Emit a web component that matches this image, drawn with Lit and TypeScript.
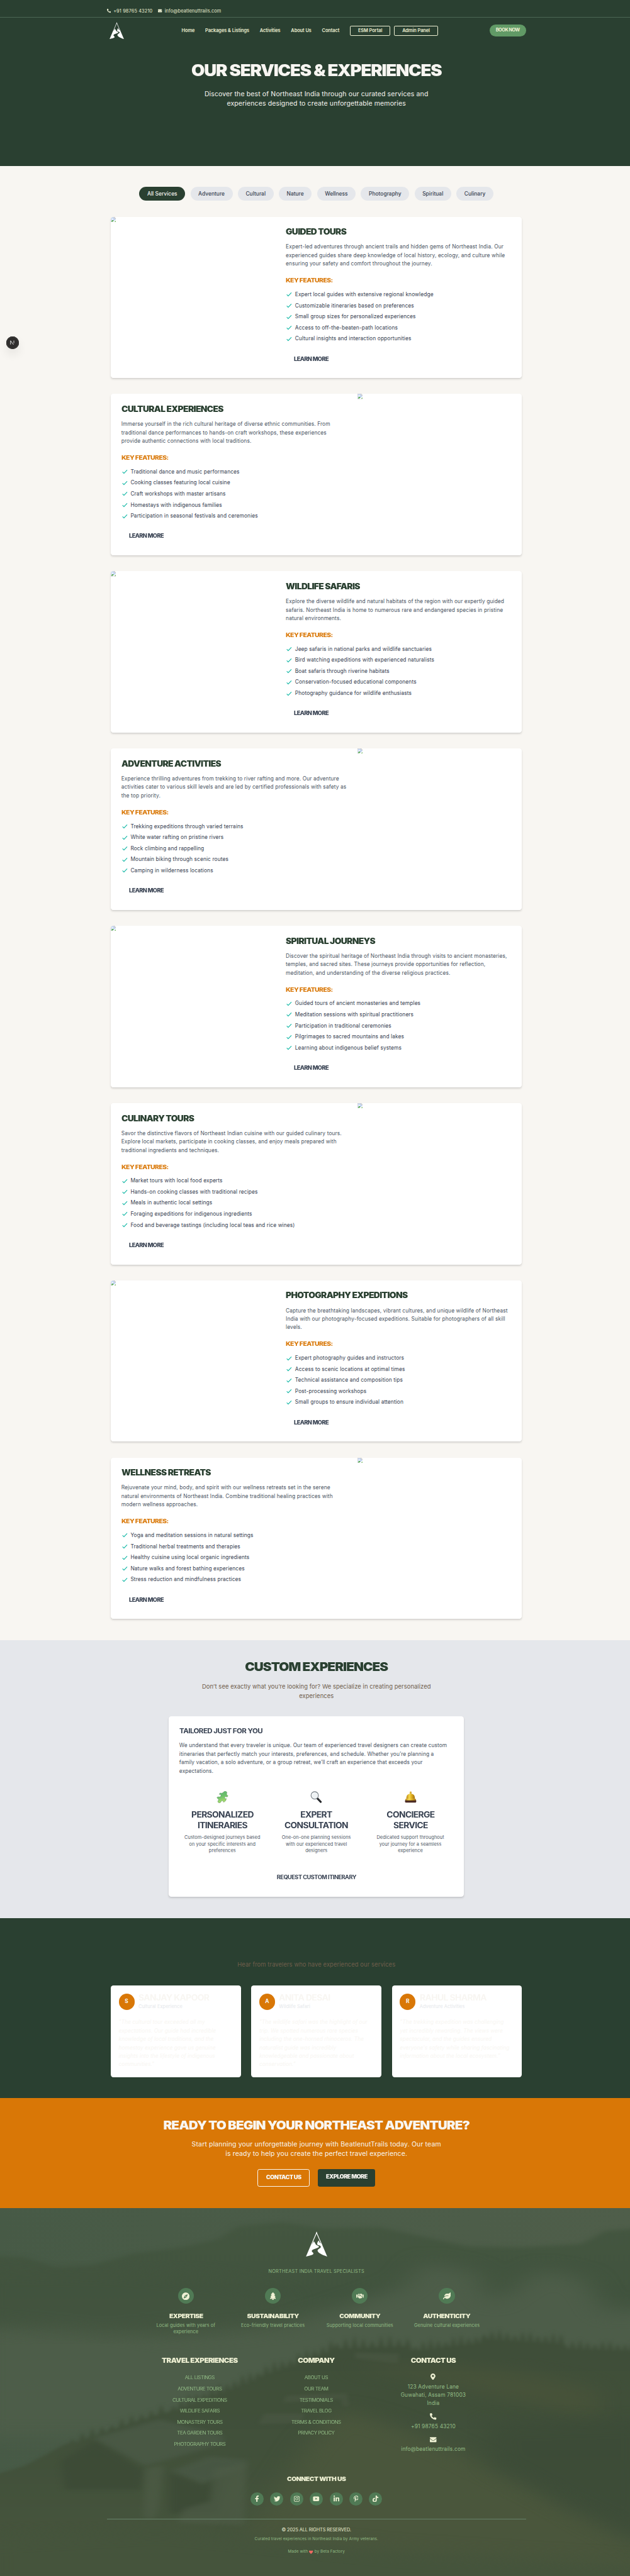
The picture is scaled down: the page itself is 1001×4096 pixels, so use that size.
import { LitElement, html, css } from "lit";
import { classMap } from "lit/directives/class-map.js";

type Service = { title: string; copy: string[]; features: string[] };

const SERVICES: Service[] = [
  {
    title: "GUIDED TOURS",
    copy: [
      "Expert-led adventures through ancient trails and hidden gems of Northeast India. Our",
      "experienced guides share deep knowledge of local history, ecology, and culture while",
      "ensuring your safety and comfort throughout the journey.",
    ],
    features: [
      "Expert local guides with extensive regional knowledge",
      "Customizable itineraries based on preferences",
      "Small group sizes for personalized experiences",
      "Access to off-the-beaten-path locations",
      "Cultural insights and interaction opportunities",
    ],
  },
  {
    title: "CULTURAL EXPERIENCES",
    copy: [
      "Immerse yourself in the rich cultural heritage of diverse ethnic communities. From",
      "traditional dance performances to hands-on craft workshops, these experiences",
      "provide authentic connections with local traditions.",
    ],
    features: [
      "Traditional dance and music performances",
      "Cooking classes featuring local cuisine",
      "Craft workshops with master artisans",
      "Homestays with indigenous families",
      "Participation in seasonal festivals and ceremonies",
    ],
  },
  {
    title: "WILDLIFE SAFARIS",
    copy: [
      "Explore the diverse wildlife and natural habitats of the region with our expertly guided",
      "safaris. Northeast India is home to numerous rare and endangered species in pristine",
      "natural environments.",
    ],
    features: [
      "Jeep safaris in national parks and wildlife sanctuaries",
      "Bird watching expeditions with experienced naturalists",
      "Boat safaris through riverine habitats",
      "Conservation-focused educational components",
      "Photography guidance for wildlife enthusiasts",
    ],
  },
  {
    title: "ADVENTURE ACTIVITIES",
    copy: [
      "Experience thrilling adventures from trekking to river rafting and more. Our adventure",
      "activities cater to various skill levels and are led by certified professionals with safety as",
      "the top priority.",
    ],
    features: [
      "Trekking expeditions through varied terrains",
      "White water rafting on pristine rivers",
      "Rock climbing and rappelling",
      "Mountain biking through scenic routes",
      "Camping in wilderness locations",
    ],
  },
  {
    title: "SPIRITUAL JOURNEYS",
    copy: [
      "Discover the spiritual heritage of Northeast India through visits to ancient monasteries,",
      "temples, and sacred sites. These journeys provide opportunities for reflection,",
      "meditation, and understanding of the diverse religious practices.",
    ],
    features: [
      "Guided tours of ancient monasteries and temples",
      "Meditation sessions with spiritual practitioners",
      "Participation in traditional ceremonies",
      "Pilgrimages to sacred mountains and lakes",
      "Learning about indigenous belief systems",
    ],
  },
  {
    title: "CULINARY TOURS",
    copy: [
      "Savor the distinctive flavors of Northeast Indian cuisine with our guided culinary tours.",
      "Explore local markets, participate in cooking classes, and enjoy meals prepared with",
      "traditional ingredients and techniques.",
    ],
    features: [
      "Market tours with local food experts",
      "Hands-on cooking classes with traditional recipes",
      "Meals in authentic local settings",
      "Foraging expeditions for indigenous ingredients",
      "Food and beverage tastings (including local teas and rice wines)",
    ],
  },
  {
    title: "PHOTOGRAPHY EXPEDITIONS",
    copy: [
      "Capture the breathtaking landscapes, vibrant cultures, and unique wildlife of Northeast",
      "India with our photography-focused expeditions. Suitable for photographers of all skill",
      "levels.",
    ],
    features: [
      "Expert photography guides and instructors",
      "Access to scenic locations at optimal times",
      "Technical assistance and composition tips",
      "Post-processing workshops",
      "Small groups to ensure individual attention",
    ],
  },
  {
    title: "WELLNESS RETREATS",
    copy: [
      "Rejuvenate your mind, body, and spirit with our wellness retreats set in the serene",
      "natural environments of Northeast India. Combine traditional healing practices with",
      "modern wellness approaches.",
    ],
    features: [
      "Yoga and meditation sessions in natural settings",
      "Traditional herbal treatments and therapies",
      "Healthy cuisine using local organic ingredients",
      "Nature walks and forest bathing experiences",
      "Stress reduction and mindfulness practices",
    ],
  },
];

const FILTERS = ["All Services", "Adventure", "Cultural", "Nature", "Wellness", "Photography", "Spiritual", "Culinary"];

const REVIEWS = [
  {
    name: "SANJAY KAPOOR",
    kind: "Cultural Experience",
    lines: [
      '"The cultural tour exceeded all my',
      "expectations. Our guide had incredible",
      "knowledge of local traditions, and the",
      "homestay experience gave us genuine",
      "insights into the lifestyle of indigenous",
      'communities."',
    ],
  },
  {
    name: "ANITA DESAI",
    kind: "Wildlife Safari",
    lines: [
      '"The wildlife safari was the highlight of our',
      "trip. We spotted numerous rare species",
      "including the one-horned rhinoceros. The",
      "naturalist guide was incredibly",
      "knowledgeable and passionate about",
      'conservation."',
    ],
  },
  {
    name: "RAHUL SHARMA",
    kind: "Adventure Activities",
    lines: [
      '"The trekking expedition was challenging',
      "yet incredibly rewarding. The views were",
      "spectacular, and the guides ensured",
      "everyone's safety while sharing fascinating",
      'information about the local ecosystem."',
    ],
  },
];

/* Solid glyphs: [viewBox width, viewBox height, path] */
const GLYPHS: Record<string, [number, number, string]> = {
  phone: [512, 512, "M497.39 361.8l-112-48a24 24 0 0 0-28 6.9l-49.6 60.6A370.66 370.66 0 0 1 130.6 204.11l60.6-49.6a23.94 23.94 0 0 0 6.9-28l-48-112A24.16 24.16 0 0 0 122.6.61l-104 24A24 24 0 0 0 0 48c0 256.5 207.9 464 464 464a24 24 0 0 0 23.4-18.6l24-104a24.29 24.29 0 0 0-14.01-27.6z"],
  mail: [512, 512, "M502.3 190.8c3.9-3.1 9.7-.2 9.7 4.7V400c0 26.5-21.5 48-48 48H48c-26.5 0-48-21.5-48-48V195.6c0-5 5.7-7.8 9.7-4.7 22.4 17.4 52.1 39.5 154.1 113.6 21.1 15.4 56.7 47.8 92.2 47.6 35.7.3 72-32.8 92.3-47.6 102-74.1 131.6-96.3 154-113.7zM256 320c23.2.4 56.6-29.2 73.4-41.4 132.7-96.3 142.8-104.7 173.4-128.7 5.8-4.5 9.2-11.5 9.2-18.9v-19c0-26.5-21.5-48-48-48H48c-26.5 0-48 21.5-48 48v19c0 7.4 3.4 14.3 9.2 18.9 30.6 23.9 40.7 32.4 173.4 128.7 16.8 12.2 50.2 41.8 73.4 41.4z"],
  pin: [384, 512, "M172.268 501.67C26.97 291.031 0 269.413 0 192 0 85.961 85.961 0 192 0s192 85.961 192 192c0 77.413-26.97 99.031-172.268 309.67-9.535 13.774-29.93 13.773-39.464 0zM192 272c44.183 0 80-35.817 80-80s-35.817-80-80-80-80 35.817-80 80 35.817 80 80 80z"],
  compass: [496, 512, "M225.38 233.37c-12.5 12.5-12.5 32.76 0 45.25 12.49 12.5 32.76 12.5 45.25 0 12.5-12.5 12.5-32.76 0-45.25-12.5-12.49-32.76-12.49-45.25 0zM248 8C111.03 8 0 119.03 0 256s111.03 248 248 248 248-111.03 248-248S384.97 8 248 8zm126.14 148.05L308.17 300.4a31.938 31.938 0 0 1-15.77 15.77l-144.34 65.97c-16.65 7.61-33.81-9.55-26.2-26.2l65.98-144.35a31.938 31.938 0 0 1 15.77-15.77l144.34-65.97c16.65-7.6 33.8 9.55 26.19 26.2z"],
  tree: [384, 512, "M378.31 378.49L298.42 288h30.63c9.01 0 16.98-5 20.78-13.06 3.8-8.04 2.55-17.26-3.28-24.05L268.42 160h28.89c9.1 0 17.3-5.35 20.86-13.61 3.52-8.13 1.86-17.59-4.24-24.08L203.66 4.83c-6.03-6.45-17.28-6.45-23.32 0L70.06 122.31c-6.1 6.49-7.75 15.95-4.24 24.08C69.38 154.65 77.59 160 86.69 160h28.89l-78.14 90.91c-5.81 6.78-7.06 15.99-3.27 24.04C37.97 283 45.93 288 54.95 288h30.63L5.69 378.49c-6 6.79-7.36 16.09-3.56 24.26 3.75 8.05 12 13.25 21.01 13.25H160v24.45l-30.29 48.4c-5.32 10.64 2.42 23.16 14.31 23.16h95.96c11.89 0 19.63-12.52 14.31-23.16L224 440.45V416h136.86c9.01 0 17.26-5.2 21.01-13.25 3.8-8.17 2.44-17.47-3.56-24.26z"],
  handshake: [640, 512, "M434.7 64h-85.9c-8 0-15.7 3-21.6 8.4l-98.3 90c-.1.1-.2.3-.3.4-16.6 15.6-16.3 40.5-2.1 56 12.7 13.9 39.4 17.6 56.1 2.7.1-.1.3-.1.4-.2l79.9-73.2c6.5-5.9 16.7-5.5 22.6 1 6 6.5 5.5 16.6-1 22.6l-26.1 23.9L504 313.8c2.9 2.4 5.5 5 7.9 7.7V128l-54.6-54.6c-5.9-6-14.1-9.4-22.6-9.4zM544 128.2v223.9c0 17.7 14.3 32 32 32h64V128.2h-96zm48 223.9c-8.8 0-16-7.2-16-16s7.2-16 16-16 16 7.2 16 16-7.2 16-16 16zM0 384h64c17.7 0 32-14.3 32-32V128.2H0V384zm48-63.9c8.8 0 16 7.2 16 16s-7.2 16-16 16-16-7.2-16-16c0-8.9 7.2-16 16-16zm435.9 18.6L334.6 217.5l-30 27.5c-29.7 27.1-75.2 24.5-101.7-4.4-26.9-29.4-24.8-74.9 4.4-101.7L289.1 64h-83.8c-8.5 0-16.6 3.4-22.6 9.4L128 128v223.9h18.3l90.5 81.9c27.4 22.3 67.7 18.1 90-9.3l.2-.2 17.9 15.5c15.9 13 39.4 10.5 52.3-5.4l31.4-38.6 5.4 4.4c13.7 11.1 33.9 9.1 45-4.7l9.5-11.7c11.2-13.8 9.1-33.9-4.6-45.1z"],
  leaf: [576, 512, "M546.2 9.7c-5.6-12.5-21.6-13-28.3-1.2C486.9 62.4 431.4 96 368 96h-80C182 96 96 182 96 288c0 7 .8 13.7 1.5 20.5C161.3 262.8 253.4 224 384 224c8.8 0 16 7.2 16 16s-7.2 16-16 16C132.6 256 26 410.1 2.4 468c-6.6 16.3 1.2 34.9 17.5 41.6 16.4 6.8 35-1.1 41.8-17.3 1.5-3.6 20.9-47.9 71.9-90.6 32.4 43.9 94 85.8 174.9 77.2C465.5 467.5 576 326.7 576 154.3c0-50.2-10.8-102.2-29.8-144.6z"],
  facebook: [320, 512, "M279.14 288l14.22-92.66h-88.91v-60.13c0-25.35 12.42-50.06 52.24-50.06h40.42V6.26S260.43 0 225.36 0c-73.22 0-121.08 44.38-121.08 124.72v70.62H22.89V288h81.39v224h100.17V288z"],
  twitter: [512, 512, "M459.37 151.716c.325 4.548.325 9.097.325 13.645 0 138.72-105.583 298.558-298.558 298.558-59.452 0-114.68-17.219-161.137-47.106 8.447.974 16.568 1.299 25.34 1.299 49.055 0 94.213-16.568 130.274-44.832-46.132-.975-84.792-31.188-98.112-72.772 6.498.974 12.995 1.624 19.818 1.624 9.421 0 18.843-1.3 27.614-3.573-48.081-9.747-84.143-51.98-84.143-102.985v-1.299c13.969 7.797 30.214 12.67 47.431 13.319-28.264-18.843-46.781-51.005-46.781-87.391 0-19.492 5.197-37.36 14.294-52.954 51.655 63.675 129.3 105.258 216.365 109.807-1.624-7.797-2.599-15.918-2.599-24.04 0-57.828 46.782-104.934 104.934-104.934 30.213 0 57.502 12.67 76.67 33.137 23.715-4.548 46.456-13.32 66.599-25.34-7.798 24.366-24.366 44.833-46.132 57.827 21.117-2.273 41.584-8.122 60.426-16.243-14.292 20.791-32.161 39.308-52.628 54.253z"],
  instagram: [448, 512, "M130 32h188a130 130 0 0 1 130 130v188a130 130 0 0 1-130 130H130A130 130 0 0 1 0 350V162A130 130 0 0 1 130 32zm0 40a90 90 0 0 0-90 90v188a90 90 0 0 0 90 90h188a90 90 0 0 0 90-90V162a90 90 0 0 0-90-90zm94 69a115 115 0 1 1 0 230 115 115 0 0 1 0-230zm0 40a75 75 0 1 0 0 150 75 75 0 0 0 0-150zm120-72a27 27 0 1 1 0 54 27 27 0 0 1 0-54z"],
  youtube: [512, 512, "M96 72h320a80 80 0 0 1 80 80v208a80 80 0 0 1-80 80H96a80 80 0 0 1-80-80V152a80 80 0 0 1 80-80zm112 104v160l138-80z"],
  linkedin: [448, 512, "M100.28 448H7.4V148.9h92.88zM53.79 108.1C24.09 108.1 0 83.5 0 53.8a53.79 53.79 0 0 1 107.58 0c0 29.7-24.1 54.3-53.79 54.3zM447.9 448h-92.68V302.4c0-34.7-.7-79.2-48.29-79.2-48.29 0-55.69 37.7-55.69 76.7V448h-92.78V148.9h89.08v40.8h1.3c12.4-23.5 42.69-48.3 87.88-48.3 94 0 111.28 61.9 111.28 142.3V448z"],
  pinterest: [384, 512, "M204 6.5C101.4 6.5 0 74.9 0 185.6 0 256 39.6 296 63.6 296c9.9 0 15.6-27.6 15.6-35.4 0-9.3-23.7-29.1-23.7-67.8 0-80.4 61.2-137.4 140.4-137.4 68.1 0 118.5 38.7 118.5 109.8 0 53.1-21.3 152.7-90.3 152.7-24.9 0-46.2-18-46.2-43.8 0-37.8 26.4-74.4 26.4-113.4 0-66.2-93.9-54.2-93.9 25.8 0 16.8 2.1 35.4 9.6 50.7-13.8 59.4-42 147.9-42 209.1 0 18.9 2.7 37.5 4.5 56.4 3.4 3.8 1.7 3.4 6.9 1.5 50.4-69 48.6-82.5 71.4-172.8 12.3 23.4 44.1 36 69.3 36 106.2 0 153.9-103.5 153.9-196.8C384 71.3 298.2 6.5 204 6.5z"],
  tiktok: [448, 512, "M448,209.91a210.06,210.06,0,0,1-122.77-39.25V349.38A162.55,162.55,0,1,1,185,188.31V278.2a74.62,74.62,0,1,0,52.23,71.18V0l88,0a121.18,121.18,0,0,0,1.86,22.17h0A122.18,122.18,0,0,0,381,102.39a121.43,121.43,0,0,0,67,20.14Z"],
  heart: [512, 512, "M462.3 62.6C407.5 15.9 326 24.3 275.7 76.2L256 96.5l-19.7-20.3C186.100 24.300 104.500 15.900 49.700 62.600c-62.800 53.600-66.100 149.800-9.900 207.900l193.500 199.800c12.500 12.900 32.800 12.900 45.300 0l193.500-199.800c56.300-58.100 53-154.300-9.800-207.900z"],
};

const glyph = (name: string, size: number) => {
  const [w, h, d] = GLYPHS[name];
  return html`<svg class="glyph" height=${size} width=${(size * w) / h} viewBox="0 0 ${w} ${h}"><path fill="currentColor" fill-rule="evenodd" d=${d}></path></svg>`;
};

const logo = (w: number, h: number) => html`<svg class="glyph" width=${w} height=${h} viewBox="0 0 77 92">
  <path d="M19.500 49 L38.500 5 L57 48" fill="none" stroke="#fff" stroke-width="2.600" stroke-linejoin="miter"></path>
  <path d="M38.500 0 L40.500 8 L38.500 10 L36.500 8Z" fill="#fff"></path>
  <path d="M0 91.500 L18 49 L22 46 L29 36 L33 43 L36 48 C40 52 47 52 47 56 C47 61 22 64 21 71 C21 76 27 76 27 81 C26 86 12 88 0 91.500Z" fill="#fff"></path>
  <path d="M41 47 C40 43 41 40 46 33 L50 41 L55 44 L58 47 L77 91.500 C61 87 43 78 42 70 C42 64 54 62 54 56 C54 50 42 52 41 47Z" fill="#fff"></path>
</svg>`;

const brokenImage = html`<svg class="broken" width="16" height="16" viewBox="0 0 16 16">
  <path d="M.5.500H11L15.500 5V15.500H.500Z" fill="#fff" stroke="#9a9ea3"></path>
  <path d="M1.500 1.500H10.500V5.500H14.500V9L7 14.500H1.500Z" fill="#c5d7f5"></path>
  <path d="M3 6.500a1.800 1.800 0 0 1 3.400-.7A1.400 1.400 0 0 1 7.500 8H3.200A1 1 0 0 1 3 6.500Z" fill="#fff"></path>
  <path d="M1.500 14.500C3 10 6 8.500 9 10.500L5.500 14.500Z" fill="#56ab3c"></path>
  <path d="M11 .5V5H15.500" fill="none" stroke="#9a9ea3"></path>
  <path d="M6 16 L16 7.500 V11 L10.500 16Z" fill="#fff"></path>
  <path d="M11 15 L15 11.500 V15Z" fill="#56ab3c"></path>
</svg>`;

const check = html`<svg class="check" width="20" height="20" viewBox="0 0 24 24" fill="none" stroke="#14b8a6" stroke-width="2.600" stroke-linecap="round" stroke-linejoin="round"><path d="M4.500 13l4.500 4.500L20 6"></path></svg>`;

const puzzle = html`<svg width="36" height="36" viewBox="0 0 36 36">
  <defs><linearGradient id="pz" x1="0" y1="0" x2="0.300" y2="1"><stop offset="0" stop-color="#5bb873"></stop><stop offset="0.500" stop-color="#6cc06c"></stop><stop offset="1" stop-color="#a9dd6e"></stop></linearGradient></defs>
  <path d="M15 6.500 L20.500 4.500 C21.500 .5 28.500-1 31 3 C33 6 29.500 8 31 10.500 L35 15 L31.500 18 C29 16 26 16 25 19 C24 22 27 24 30 22.500 L28 29 L22 34 C20 33 21 30 18 29 C14.500 28.500 14 32 12 34.500 C9 37 3.500 35 4 31 C4.500 28 7.500 27.500 6 25 L1 20 L4.500 17 C8 18.500 12.500 18 13.500 14.500 C14 11 10 9 8 10 L11 5.500Z" fill="url(#pz)" stroke="#4a7a4d" stroke-width=".8"></path>
</svg>`;

const magnifier = html`<svg width="36" height="36" viewBox="0 0 36 36">
  <path d="M21.500 22 L31.500 32.500" stroke="#1d1f22" stroke-width="6" stroke-linecap="round"></path>
  <circle cx="13.500" cy="13" r="11.300" fill="#eef2f4" stroke="#70797f" stroke-width="2"></circle>
  <path d="M5 13a8.500 8.500 0 0 1 8.500-8.500" fill="none" stroke="#fff" stroke-width="1.500"></path>
  <path d="M23 22.500 L31 31" stroke="#52565c" stroke-width="1.300" stroke-linecap="round"></path>
</svg>`;

const bell = html`<svg width="36" height="36" viewBox="0 0 36 36">
  <defs><linearGradient id="bl" x1="0" y1="0" x2="1" y2="0"><stop offset="0" stop-color="#b98310"></stop><stop offset="0.350" stop-color="#f6d84c"></stop><stop offset="0.600" stop-color="#e0b01e"></stop><stop offset="1" stop-color="#a06d10"></stop></linearGradient></defs>
  <rect x="1" y="26.500" width="34" height="8.500" rx="3" fill="#4d2c24"></rect>
  <rect x="15.500" y="1" width="5" height="8" rx="2.500" fill="url(#bl)"></rect>
  <path d="M5 24 C5 13 8 8 18 8 S31 13 31 24Z" fill="url(#bl)"></path>
  <rect x="2" y="23.500" width="32" height="4.500" rx="2" fill="url(#bl)"></rect>
</svg>`;

/* Hazy mountain village behind the footer */
const pines = (x0: number, y0: number, x1: number, y1: number, n: number, h: number) => {
  let d = "";
  for (let i = 0; i <= n; i++) {
    const x = x0 + ((x1 - x0) * i) / n;
    const y = y0 + ((y1 - y0) * i) / n;
    const k = h * (0.5 + 0.5 * Math.abs(Math.sin(i * 2.3)));
    d += `L${x - 8} ${y} L${x} ${y - k} L${x + 8} ${y}`;
  }
  return d;
};
const scenery = html`<svg class="scenery" viewBox="0 0 1568 1548" preserveAspectRatio="none">
  <defs>
    <filter id="soft" x="-5%" y="-5%" width="110%" height="110%" color-interpolation-filters="sRGB"><feGaussianBlur stdDeviation="9"></feGaussianBlur></filter>
    <filter id="mist" x="-10%" y="-10%" width="120%" height="120%" color-interpolation-filters="sRGB"><feGaussianBlur stdDeviation="34"></feGaussianBlur></filter>
    <filter id="fine" x="-5%" y="-5%" width="110%" height="110%" color-interpolation-filters="sRGB"><feGaussianBlur stdDeviation="5"></feGaussianBlur></filter>
    <linearGradient id="sky" x1="0" y1="0" x2="1" y2="0"><stop offset="0" stop-color="#475a46"></stop><stop offset="1" stop-color="#4f5e4a"></stop></linearGradient>
    <linearGradient id="ridge" x1="0" y1="0" x2="0" y2="1"><stop offset="0" stop-color="#445640"></stop><stop offset="0.600" stop-color="#41533e"></stop><stop offset="1" stop-color="#475843"></stop></linearGradient>
    <linearGradient id="slope" x1="0" y1="0" x2="0" y2="1"><stop offset="0" stop-color="#3f4e39"></stop><stop offset="0.450" stop-color="#41503a"></stop><stop offset="1" stop-color="#48563e"></stop></linearGradient>
  </defs>
  <rect width="1568" height="1548" fill="url(#sky)"></rect>
  <path filter="url(#soft)" fill="url(#ridge)" d="M-40 200 L60 205 L140 250 L230 240 L330 190 L450 165 L540 130 L590 75 L700 60 L800 85 L940 80 L1090 135 L1160 160 L1290 165 L1440 150 L1500 95 L1620 80 L1620 560 L1300 560 L1200 520 L980 560 L300 560 L-40 540Z"></path>
  <path filter="url(#mist)" fill="#4d5d49" d="M-60 500 L200 490 L420 540 L700 500 L880 400 L1000 330 L1050 230 L1180 270 L1220 400 L1340 260 L1450 300 L1500 440 L1640 420 L1640 640 L1100 660 L700 740 L300 960 L-60 960Z"></path>
  <path filter="url(#mist)" fill="#42533e" opacity=".6" d="M-60 260 L260 250 L560 300 L720 380 L620 470 L260 540 L-60 480Z"></path>
  <path filter="url(#fine)" fill="url(#slope)" d="M-20 1580 L-20 1120 L60 1080 L160 990${pines(180, 985, 400, 860, 9, 40)}${pines(430, 850, 620, 730, 10, 50)}${pines(640, 710, 820, 600, 9, 50)}${pines(835, 590, 1010, 580, 8, 55)}${pines(1030, 600, 1180, 570, 8, 50)}${pines(1200, 550, 1390, 570, 10, 50)}${pines(1400, 590, 1568, 600, 9, 45)} L1600 1580Z"></path>
  <path filter="url(#mist)" fill="#4a563c" d="M840 850 C1000 900 1150 1040 1300 1160 C1420 1260 1500 1360 1640 1460 L1640 1600 L900 1600 L600 1400 L760 1000Z"></path>
  <path filter="url(#mist)" fill="#4c553a" d="M860 660 C1100 640 1300 680 1480 760 L1480 900 L1350 830 L1060 720Z" opacity=".6"></path>
  <path filter="url(#mist)" fill="#3c4b37" opacity=".8" d="M1200 900 L1620 880 L1620 1420 L1420 1260 L1220 1080Z"></path>
  <path filter="url(#soft)" fill="#4b5a47" opacity=".8" d="M230 965 L395 885 L550 950 L555 985 L360 1080Z"></path>
  <path filter="url(#soft)" fill="#495845" opacity=".85" d="M425 1100 L520 1040 L615 1055 L610 1085 L505 1160Z"></path>
  <path filter="url(#fine)" fill="#4b5844" opacity=".6" d="M710 785 L860 775 L865 830 L850 830 L845 800 L700 815Z M655 860 L755 860 L745 900 L640 905Z M880 605 L990 610 L985 650 L880 630Z"></path>
  <path filter="url(#soft)" fill="#3c4a36" opacity=".8" d="M150 1060 L235 975 L355 1100 L350 1180 L160 1180Z M420 1110 L500 1160 L560 1120 L540 1280 L420 1280Z"></path>
  <path filter="url(#soft)" fill="#4e5c47" opacity=".65" d="M360 1090 L405 1075 L395 1240 L385 1300 L355 1300Z M530 1090 L612 1070 L605 1330 L440 1320 L455 1260 L520 1230Z"></path>
  <path filter="url(#mist)" fill="#45543c" d="M-40 1380 L400 1340 L1000 1440 L1600 1500 L1600 1600 L-40 1600Z"></path>
</svg>`;

class AppRoot extends LitElement {
  static styles = css`
    :host { display: block; width: 100%; height: 4096px; overflow: hidden; background: #45543d; }
    * { box-sizing: border-box; }
    h1, h2, h3, h4, p, ul { margin: 0; padding: 0; }
    ul { list-style: none; }
    .page { zoom: 0.52365; width: 1920px; position: relative; font-family: Inter, "Liberation Sans", sans-serif; font-size: 16px; line-height: 25.6px; letter-spacing: 0.0132em; color: #374151; background: #f8f6f2; white-space: nowrap; }
    .glyph { display: block; flex: none; }
    /* Display type: extended and tightly tracked */
    .head, .wide { transform: scaleX(1.1); letter-spacing: -0.0445em; }
    .head { font-weight: 900; }
    .left { transform-origin: left center; }
    .wrap { width: 1248px; margin: 0 auto; }

    .hero { height: 504px; background: #2a4031; color: #f8f6f2; text-align: center; }
    .topbar { height: 53px; padding: 16px 324px 0 330px; border-bottom: 1px solid #4b6753; display: flex; align-items: center; font-size: 14px; letter-spacing: 0.0205em; color: #eef0d3; }
    .topbar { padding-left: 324px; }
    .topbar span { margin: 0 17px 0 8px; }
    .nav { height: 80px; padding: 0 324px 0 333px; display: flex; align-items: center; color: #eef0d3; font-size: 14px; font-weight: 600; letter-spacing: -0.0045em; }
    .links { margin-left: 174px; display: flex; align-items: center; gap: 32px; }
    .portals { display: flex; gap: 12px; }
    .portal { height: 30px; border: 1.500px solid #eef0d3; border-radius: 4px; padding: 0 22.500px; line-height: 27px; }
    .book { margin-left: auto; width: 111px; height: 36px; border-radius: 18px; background: #619a66; line-height: 36px; text-align: center; letter-spacing: -0.065em; font-weight: 700; }
    .hero h1 { margin-top: 53px; font-size: 48px; line-height: 58px; }
    .lead { font-size: 20px; line-height: 28px; letter-spacing: 0.0135em; }
    .hero .lead { margin-top: 29px; }

    .services { padding: 64px 0; }
    .filters { display: flex; justify-content: center; gap: 16px; margin-bottom: 48px; }
    .filter { height: 42px; border-radius: 21px; padding: 0 24px; line-height: 42px; background: #e5e7eb; font-weight: 500; letter-spacing: 0.004em; }
    .filter.on { background: #2a4031; color: #f8f6f2; }
    .stack { display: flex; flex-direction: column; gap: 48px; }
    .card { height: 490.300px; background: #fff; border-radius: 8px; display: flex; overflow: hidden; }
    .lift { border-radius: 8px; box-shadow: 0 4px 6px -1px rgba(0, 0, 0, 0.13), 0 2px 4px -2px rgba(0, 0, 0, 0.12); }
    .card.flip { flex-direction: row-reverse; }
    .photo { width: 40%; }
    .broken { display: block; }
    .info { width: 60%; padding: 32px; }
    .info h2 { font-size: 24px; line-height: 29px; color: #2a4031; }
    .info .copy { margin-top: 19px; color: #4b5563; }
    .info h3 { margin-top: 26px; font-size: 18px; line-height: 22px; color: #d97706; font-weight: 800; letter-spacing: -0.0515em; }
    .info ul { margin-top: 19.500px; display: flex; flex-direction: column; gap: 8px; }
    .info li { display: flex; align-items: center; gap: 8px; }
    .check { flex: none; }
    .more { margin: 36px 0 0 24px; font-weight: 800; letter-spacing: -0.06em; }

    .custom { height: 844px; padding-top: 64px; background: #e5e7eb; text-align: center; }
    .custom > h2, .cta h2 { font-size: 36px; line-height: 38px; }
    .custom > h2 { color: #2a4031; }
    .sub { font-size: 18px; line-height: 28px; color: #6f5e4c; letter-spacing: 0.008em; }
    .custom .sub { margin: 26.700px 0 47.400px; letter-spacing: 0.0065em; }
    .tailor { width: 896px; height: 548.500px; margin: 0 auto; padding: 32px; background: #fff; text-align: left; }
    .tailor h3 { font-size: 20px; line-height: 27px; font-weight: 700; letter-spacing: -0.0465em; }
    .tailor .copy { margin-top: 17.600px; color: #4b5563; letter-spacing: 0.0103em; }
    .trio { margin-top: 48px; display: grid; grid-template-columns: repeat(3, 1fr); gap: 24px; text-align: center; color: #4b5563; }
    .trio svg { display: block; margin: 0 auto 19px; }
    .trio h4 { font-size: 24px; line-height: 33.600px; font-weight: 700; color: #374151; }
    .trio p { margin-top: 9.300px; font-size: 14px; line-height: 20.200px; }
    .request { margin-top: 59px; text-align: center; font-weight: 700; letter-spacing: -0.053em; line-height: 22px; }

    .voices { height: 547px; padding-top: 128px; background: #2a4031; text-align: center; }
    .reviews { margin-top: 48px; display: grid; grid-template-columns: repeat(3, 1fr); gap: 32px; text-align: left; }
    .review { height: 279px; background: #fff; border-radius: 8px; padding: 24px; color: #f8f6f2; }
    .who { display: flex; align-items: center; gap: 12px; height: 53px; }
    .avatar { width: 48px; height: 48px; border-radius: 50%; background: #d97706; text-align: center; line-height: 48px; font-weight: 700; }
    .who h3 { font-size: 24px; line-height: 32px; font-weight: 700; letter-spacing: -0.04em; }
    .who p { font-size: 14px; line-height: 20px; color: #e5e7eb; }
    .quote { margin-top: 24px; font-style: italic; letter-spacing: 0.005em; }

    .cta { height: 333px; padding-top: 64px; background: #d97706; color: #f8f6f2; text-align: center; }
    .cta .lead { margin-top: 26.600px; letter-spacing: 0.0145em; }
    .actions { margin-top: 31px; display: flex; justify-content: center; gap: 24px; }
    .btn { height: 53px; border-radius: 6px; font-weight: 900; }
    .btn div { letter-spacing: -0.058em; }
    .btn.line { width: 159px; border: 2px solid #f8f6f2; line-height: 48px; }
    .btn.solid { width: 175px; background: #2a4031; line-height: 47px; }

    .footer { height: 1122px; position: relative; overflow: hidden; background: #45563f; color: #93bd86; text-align: center; font-size: 14px; }
    .scenery { position: absolute; left: 0; top: 0; width: 1920px; height: 1122px; }
    .body { position: relative; padding-top: 71px; }
    .body > .glyph { margin: 0 auto; }
    .tag { margin-top: 35.500px; line-height: 20px; letter-spacing: 0.0297em; }
    .values { width: 1024px; margin: 40.500px auto 0; display: grid; grid-template-columns: repeat(4, 1fr); gap: 32px; line-height: 20px; }
    .disc { border-radius: 50%; background: #507a55; color: #eef0d3; display: flex; align-items: center; justify-content: center; }
    .values .disc { width: 48px; height: 48px; margin: 0 auto 24px; }
    .footer h3 { color: #eef0d3; font-size: 18px; line-height: 25.600px; }
    .values p { margin-top: 7px; }
    .cols { width: 1024px; height: 297.400px; margin: 62.600px auto 0; display: grid; grid-template-columns: repeat(3, 1fr); gap: 40px; }
    .cols h3 { font-size: 20px; line-height: 28px; margin-bottom: 25px; }
    .menu { display: flex; flex-direction: column; gap: 8px; line-height: 25.600px; }
    .menu span { transform: scaleX(1.08); letter-spacing: -0.057em; }
    .contact .glyph { margin: 0 auto; color: #eef0d3; }
    .contact { font-size: 16px; letter-spacing: 0.0206em; }
    .contact h3 { margin-bottom: 24px; }
    .contact p { margin: 8px 0 16px; }
    .connect { margin-top: 62.700px; }
    .social { margin-top: 27px; display: flex; justify-content: center; gap: 20px; }
    .social .disc { width: 40px; height: 40px; }
    .legal { width: 1272px; margin: 40px auto 0; border-top: 1px solid #66836a; padding-top: 23px; }
    .rights { color: #eef0d3; line-height: 20px; letter-spacing: -0.012em; }
    .small { font-size: 12px; line-height: 16px; margin-top: 8.400px; }
    .made { margin-top: 24px; display: flex; justify-content: center; align-items: center; gap: 4px; color: #93bd86; }
    .made .glyph { color: #f06a63; }

    .badge { position: absolute; left: 19px; top: 1021px; width: 38px; height: 38px; border-radius: 50%; background: #2f2d2c; box-shadow: inset 0 0 0 1px #1b1a19, inset 0 0 0 2px #4d4b49, 0 16px 32px -8px rgba(0, 0, 0, 0.24); display: flex; align-items: center; justify-content: center; }
  `;

  private service(s: Service, i: number) {
    return html`<div class="lift"><article class=${classMap({ card: true, flip: i % 2 === 1 })}>
      <div class="photo">${brokenImage}</div>
      <div class="info">
        <h2 class="head left">${s.title}</h2>
        <div class="copy">${s.copy.map((l) => html`<div>${l}</div>`)}</div>
        <h3 class="wide left">KEY FEATURES:</h3>
        <ul>${s.features.map((f) => html`<li>${check}<span>${f}</span></li>`)}</ul>
        <div class="more wide left">LEARN MORE</div>
      </div>
    </article></div>`;
  }

  private trio(icon: unknown, title: string[], lines: string[]) {
    return html`<div>${icon}<h4 class="wide">${title[0]}<br />${title[1]}</h4><p>${lines[0]}<br />${lines[1]}<br />${lines[2]}</p></div>`;
  }

  private value(icon: string, size: number, title: string, lines: string[]) {
    return html`<div><div class="disc">${glyph(icon, size)}</div><h3 class="head">${title}</h3><p>${lines.map((l) => html`${l}<br />`)}</p></div>`;
  }

  render() {
    return html`<div class="page">
      <header class="hero">
        <div class="topbar">${glyph("phone", 12)}<span>+91 98765 43210</span>${glyph("mail", 12)}<span>info@beatlenuttrails.com</span></div>
        <nav class="nav">
          ${logo(44, 52)}
          <div class="links">
            <span>Home</span><span>Packages &amp; Listings</span><span>Activities</span><span>About Us</span><span>Contact</span>
            <div class="portals"><span class="portal">ESM Portal</span><span class="portal">Admin Panel</span></div>
          </div>
          <div class="book">BOOK NOW</div>
        </nav>
        <h1 class="head">OUR SERVICES &amp; EXPERIENCES</h1>
        <p class="lead">Discover the best of Northeast India through our curated services and<br />experiences designed to create unforgettable memories</p>
      </header>

      <section class="services">
        <div class="filters">${FILTERS.map((f, i) => html`<div class=${classMap({ filter: true, on: i === 0 })}>${f}</div>`)}</div>
        <div class="wrap stack">${SERVICES.map((s, i) => this.service(s, i))}</div>
      </section>

      <section class="custom">
        <h2 class="head">CUSTOM EXPERIENCES</h2>
        <p class="sub">Don’t see exactly what you’re looking for? We specialize in creating personalized<br />experiences</p>
        <div class="tailor lift">
          <h3 class="wide left">TAILORED JUST FOR YOU</h3>
          <p class="copy">We understand that every traveler is unique. Our team of experienced travel designers can create custom<br />itineraries that perfectly match your interests, preferences, and schedule. Whether you’re planning a<br />family vacation, a solo adventure, or a group retreat, we’ll craft an experience that exceeds your<br />expectations.</p>
          <div class="trio">
            ${this.trio(puzzle, ["PERSONALIZED", "ITINERARIES"], ["Custom-designed journeys based", "on your specific interests and", "preferences"])}
            ${this.trio(magnifier, ["EXPERT", "CONSULTATION"], ["One-on-one planning sessions", "with our experienced travel", "designers"])}
            ${this.trio(bell, ["CONCIERGE", "SERVICE"], ["Dedicated support throughout", "your journey for a seamless", "experience"])}
          </div>
          <div class="request wide">REQUEST CUSTOM ITINERARY</div>
        </div>
      </section>

      <section class="voices">
        <p class="sub">Hear from travelers who have experienced our services</p>
        <div class="wrap reviews">
          ${REVIEWS.map((r) => html`<article class="review">
            <div class="who"><div class="avatar">${r.name[0]}</div><div><h3 class="wide left">${r.name}</h3><p>${r.kind}</p></div></div>
            <div class="quote">${r.lines.map((l) => html`<div>${l}</div>`)}</div>
          </article>`)}
        </div>
      </section>

      <section class="cta">
        <h2 class="head">READY TO BEGIN YOUR NORTHEAST ADVENTURE?</h2>
        <p class="lead">Start planning your unforgettable journey with BeatlenutTrails today. Our team<br />is ready to help you create the perfect travel experience.</p>
        <div class="actions"><div class="btn line"><div class="wide">CONTACT US</div></div><div class="btn solid"><div class="wide">EXPLORE MORE</div></div></div>
      </section>

      <footer class="footer">
        ${scenery}
        <div class="body">
          ${logo(65, 77)}
          <p class="tag">NORTHEAST INDIA TRAVEL SPECIALISTS</p>
          <div class="values">
            ${this.value("compass", 24, "EXPERTISE", ["Local guides with years of", "experience"])}
            ${this.value("tree", 24, "SUSTAINABILITY", ["Eco-friendly travel practices"])}
            ${this.value("handshake", 19, "COMMUNITY", ["Supporting local communities"])}
            ${this.value("leaf", 21, "AUTHENTICITY", ["Genuine cultural experiences"])}
          </div>
          <div class="cols">
            <div><h3 class="head">TRAVEL EXPERIENCES</h3><div class="menu">
              <span>ALL LISTINGS</span><span>ADVENTURE TOURS</span><span>CULTURAL EXPEDITIONS</span><span>WILDLIFE SAFARIS</span><span>MONASTERY TOURS</span><span>TEA GARDEN TOURS</span><span>PHOTOGRAPHY TOURS</span>
            </div></div>
            <div><h3 class="head">COMPANY</h3><div class="menu">
              <span>ABOUT US</span><span>OUR TEAM</span><span>TESTIMONIALS</span><span>TRAVEL BLOG</span><span>TERMS &amp; CONDITIONS</span><span>PRIVACY POLICY</span>
            </div></div>
            <div class="contact"><h3 class="head">CONTACT US</h3>
              ${glyph("pin", 20)}<p>123 Adventure Lane<br />Guwahati, Assam 781003<br />India</p>
              ${glyph("phone", 20)}<p>+91 98765 43210</p>
              ${glyph("mail", 20)}<p>info@beatlenuttrails.com</p>
            </div>
          </div>
          <h3 class="head connect">CONNECT WITH US</h3>
          <div class="social">${["facebook", "twitter", "instagram", "youtube", "linkedin", "pinterest", "tiktok"].map((n) => html`<div class="disc">${glyph(n, 20)}</div>`)}</div>
          <div class="legal">
            <p class="rights">© 2025 ALL RIGHTS RESERVED.</p>
            <p class="small">Curated travel experiences in Northeast India by Army veterans.</p>
            <div class="small made"><span>Made with</span>${glyph("heart", 12)}<span>by Beta Factory</span></div>
          </div>
        </div>
      </footer>

      <div class="badge"><svg width="14" height="14" viewBox="0 0 14 14" fill="none" stroke="#fff" stroke-width="1.600"><path d="M1.500 13V1.500L11 14"></path><path d="M11.500 1V9"></path></svg></div>
    </div>`;
  }
}
customElements.define("app-root", AppRoot);
